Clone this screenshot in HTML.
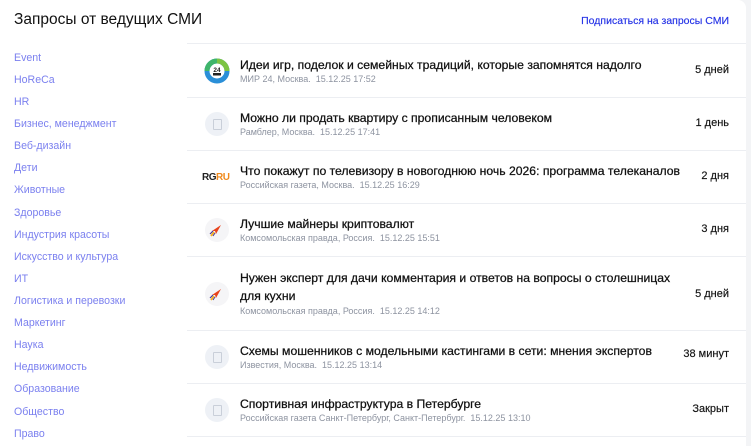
<!DOCTYPE html>
<html><head><meta charset="utf-8"><style>
*{margin:0;padding:0;box-sizing:border-box}
body{width:751px;height:446px;overflow:hidden;background:#f3f4f6;font-family:"Liberation Sans",Arial,sans-serif;position:relative}
.card{position:absolute;left:0;top:0;width:746px;height:446px;background:#fff;border-radius:0 8px 0 0}
h1{position:absolute;left:14px;top:11px;font-size:15.5px;font-weight:400;color:#111}
.sub{position:absolute;right:17px;top:15px;font-size:10.5px;color:#2432e6;-webkit-text-stroke:0.15px #2432e6}
.nav a{position:absolute;left:14px;font-size:10.6px;color:#7b80ef;text-decoration:none}
.line{position:absolute;left:187px;width:559px;height:1px;background:#eceef2}
.row{position:absolute;left:187px;width:559px}
.ic{position:absolute;left:18px;width:24px;height:24px;border-radius:50%;background:#eef1f6}
.ic::after{content:"";position:absolute;left:8px;top:7px;width:7px;height:9px;border:1px solid #c9cfd9;border-radius:1px}
.ic.k::after{display:none}
.t{position:absolute;left:53px;font-size:12.2px;color:#111;line-height:18px;-webkit-text-stroke:0.25px #111;white-space:nowrap}
.m{position:absolute;left:53px;font-size:9px;color:#8d93a0;white-space:nowrap}
.r{position:absolute;right:17px;font-size:11px;color:#111;-webkit-text-stroke:0.15px #111}
</style></head><body>
<div class="card">
<h1>Запросы от ведущих СМИ</h1>
<div class="sub">Подписаться на запросы СМИ</div>
<div class="nav">
<a style="top:52px">Event</a><a style="top:74px">HoReCa</a><a style="top:96px">HR</a>
<a style="top:118px">Бизнес, менеджмент</a><a style="top:140px">Веб-дизайн</a><a style="top:162px">Дети</a>
<a style="top:184px">Животные</a><a style="top:207px">Здоровье</a><a style="top:229px">Индустрия красоты</a>
<a style="top:251px">Искусство и культура</a><a style="top:273px">ИТ</a><a style="top:295px">Логистика и перевозки</a>
<a style="top:317px">Маркетинг</a><a style="top:339px">Наука</a><a style="top:361px">Недвижимость</a>
<a style="top:383px">Образование</a><a style="top:406px">Общество</a><a style="top:428px">Право</a>
</div>
<div class="line" style="top:43px"></div>
<div class="line" style="top:97px"></div>
<div class="line" style="top:150px"></div>
<div class="line" style="top:203px"></div>
<div class="line" style="top:256px"></div>
<div class="line" style="top:330px"></div>
<div class="line" style="top:383px"></div>
<div class="line" style="top:436px"></div>

<div class="row" style="top:44px">
<svg style="position:absolute;left:17px;top:14px" width="26" height="26" viewBox="0 0 26 26"><circle cx="13" cy="13" r="10" fill="none" stroke="#2a8fd8" stroke-width="5"/><path d="M13 3 A10 10 0 0 1 23 13" fill="none" stroke="#7cc443" stroke-width="5"/><path d="M3 13 A10 10 0 0 1 13 3" fill="none" stroke="#3fb56a" stroke-width="5"/><circle cx="13" cy="13" r="7" fill="#fff"/><text x="13" y="14" font-size="6.5" font-weight="700" text-anchor="middle" fill="#222" font-family="Liberation Sans">24</text><rect x="9" y="15" width="8" height="2.5" fill="#222"/></svg>
<div class="t" style="top:12px">Идеи игр, поделок и семейных традиций, которые запомнятся надолго</div>
<div class="m" style="top:30px">МИР 24, Москва.&nbsp; 15.12.25 17:52</div>
<div class="r" style="top:20px">5 дней</div></div>

<div class="row" style="top:97px">
<div class="ic" style="top:15px"></div>
<div class="t" style="top:12px">Можно ли продать квартиру с прописанным человеком</div>
<div class="m" style="top:30px">Рамблер, Москва.&nbsp; 15.12.25 17:41</div>
<div class="r" style="top:20px">1 день</div></div>

<div class="row" style="top:150px">
<div style="position:absolute;left:15px;top:22px;font-size:10px;font-weight:700;letter-spacing:-0.5px;color:#222">RG<span style="color:#f08a1c">RU</span></div>
<div class="t" style="top:12px">Что покажут по телевизору в новогоднюю ночь 2026: программа телеканалов</div>
<div class="m" style="top:30px">Российская газета, Москва.&nbsp; 15.12.25 16:29</div>
<div class="r" style="top:20px">2 дня</div></div>

<div class="row" style="top:203px">
<div class="ic k" style="top:15px;background:#f5f5f7"></div>
<svg style="position:absolute;left:22px;top:20px" width="14" height="14" viewBox="0 0 14 14"><path d="M3 8 L12 2 L7 11 L6 8 Z" fill="#e8431c"/><path d="M5 9 L2 13" stroke="#f7b21b" stroke-width="1.8"/><path d="M4 8 L1 11" stroke="#4a3a9a" stroke-width="1.2"/><path d="M6 10 L4 13" stroke="#4a3a9a" stroke-width="1"/></svg>
<div class="t" style="top:12px">Лучшие майнеры криптовалют</div>
<div class="m" style="top:30px">Комсомольская правда, Россия.&nbsp; 15.12.25 15:51</div>
<div class="r" style="top:20px">3 дня</div></div>

<div class="row" style="top:256px">
<div class="ic k" style="top:26px;background:#f5f5f7"></div>
<svg style="position:absolute;left:22px;top:31px" width="14" height="14" viewBox="0 0 14 14"><path d="M3 8 L12 2 L7 11 L6 8 Z" fill="#e8431c"/><path d="M5 9 L2 13" stroke="#f7b21b" stroke-width="1.8"/><path d="M4 8 L1 11" stroke="#4a3a9a" stroke-width="1.2"/><path d="M6 10 L4 13" stroke="#4a3a9a" stroke-width="1"/></svg>
<div class="t" style="top:13px;line-height:18px">Нужен эксперт для дачи комментария и ответов на вопросы о столешницах<br>для кухни</div>
<div class="m" style="top:50px">Комсомольская правда, Россия.&nbsp; 15.12.25 14:12</div>
<div class="r" style="top:32px">5 дней</div></div>

<div class="row" style="top:330px">
<div class="ic" style="top:15px"></div>
<div class="t" style="top:12px">Схемы мошенников с модельными кастингами в сети: мнения экспертов</div>
<div class="m" style="top:30px">Известия, Москва.&nbsp; 15.12.25 13:14</div>
<div class="r" style="top:18px">38 минут</div></div>

<div class="row" style="top:383px">
<div class="ic" style="top:15px"></div>
<div class="t" style="top:12px">Спортивная инфраструктура в Петербурге</div>
<div class="m" style="top:30px">Российская газета Санкт-Петербург, Санкт-Петербург.&nbsp; 15.12.25 13:10</div>
<div class="r" style="top:20px">Закрыт</div></div>
</div>
</body></html>
